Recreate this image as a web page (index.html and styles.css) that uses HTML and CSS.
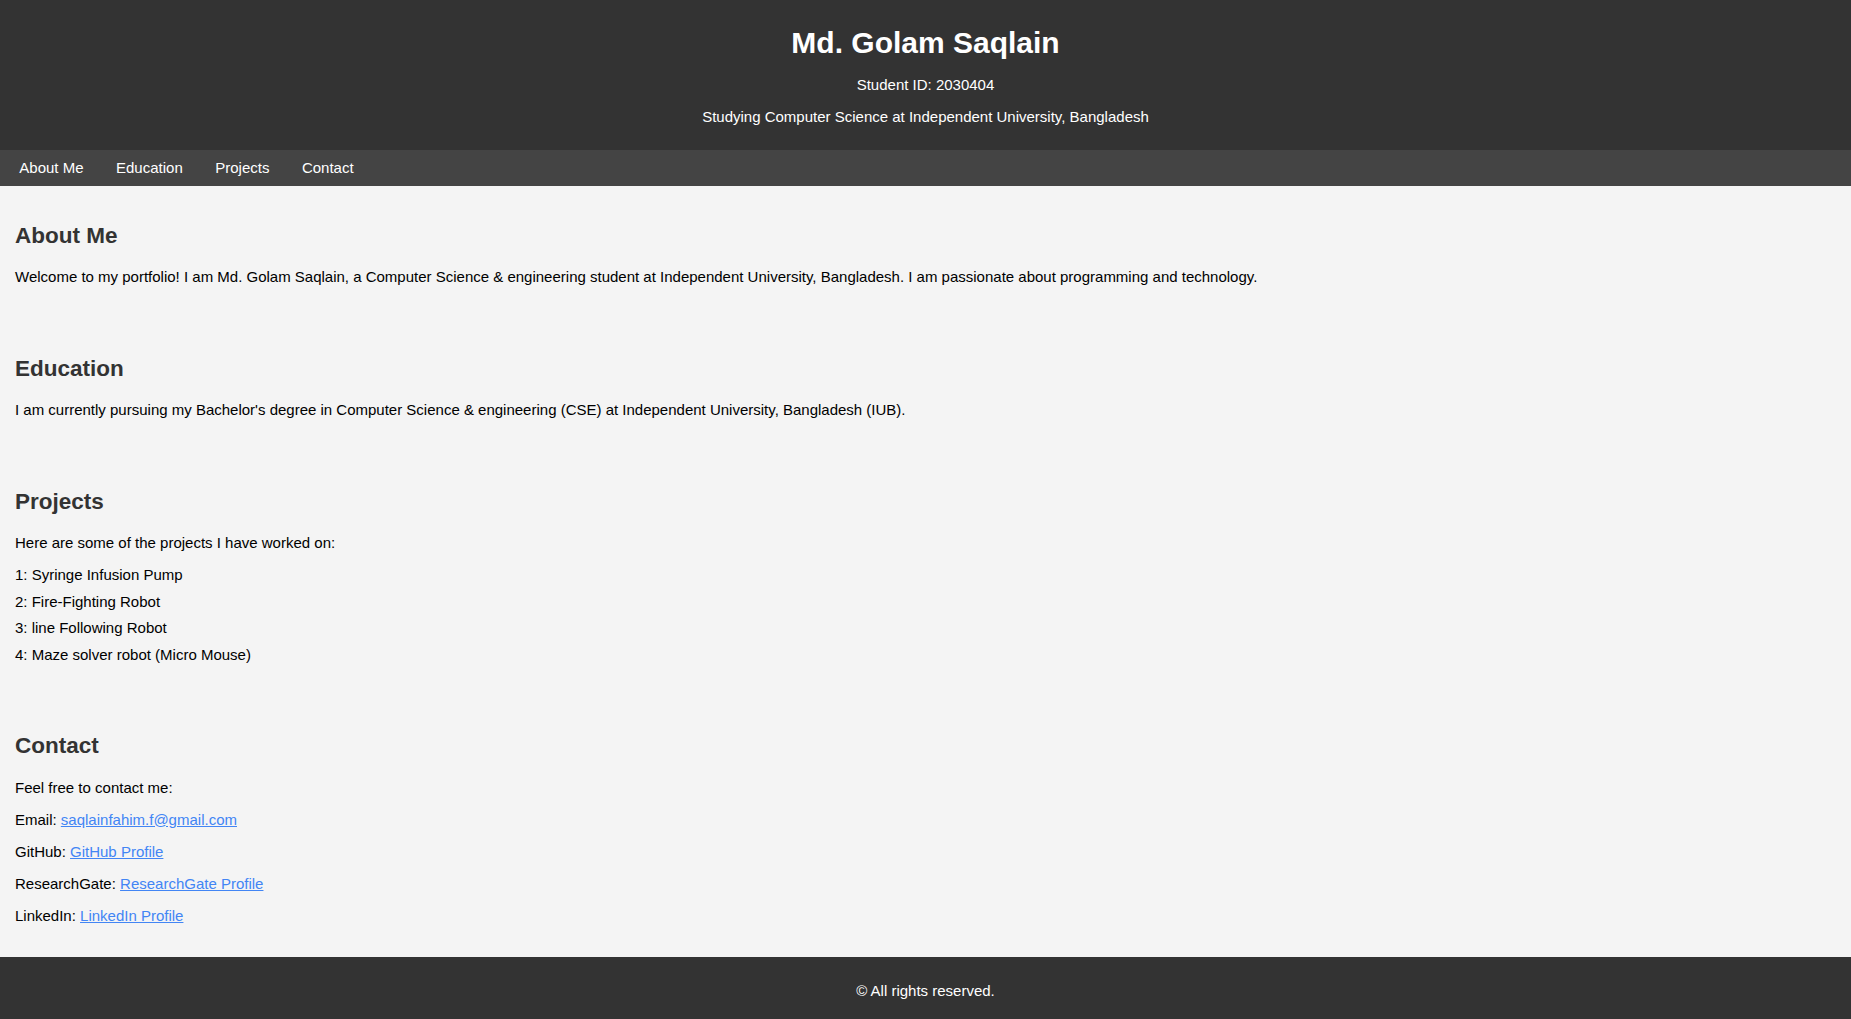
FILE: index.html
```html
<!DOCTYPE html>
<html lang="en">
<head>
<meta charset="UTF-8">
<title>Md. Golam Saqlain - Portfolio</title>
<link rel="stylesheet" href="styles.css">
</head>
<body>
<header class="site-header">
  <h1 class="site-title">Md. Golam Saqlain</h1>
  <p class="site-sub">Student ID: 2030404</p>
  <p class="site-sub">Studying Computer Science at Independent University, Bangladesh</p>
</header>
<nav class="site-nav">
  <a href="#about">About Me</a>
  <a href="#education">Education</a>
  <a href="#projects">Projects</a>
  <a href="#contact">Contact</a>
</nav>
<main class="content">
  <section id="about" class="section">
    <h2>About Me</h2>
    <p>Welcome to my portfolio! I am Md. Golam Saqlain, a Computer Science &amp; engineering student at Independent University, Bangladesh. I am passionate about programming and technology.</p>
  </section>
  <section id="education" class="section">
    <h2>Education</h2>
    <p>I am currently pursuing my Bachelor's degree in Computer Science &amp; engineering (CSE) at Independent University, Bangladesh (IUB).</p>
  </section>
  <section id="projects" class="section">
    <h2>Projects</h2>
    <p>Here are some of the projects I have worked on:</p>
    <ul class="project-list">
      <li>1: Syringe Infusion Pump</li>
      <li>2: Fire-Fighting Robot</li>
      <li>3: line Following Robot</li>
      <li>4: Maze solver robot (Micro Mouse)</li>
    </ul>
  </section>
  <section id="contact" class="section">
    <h2>Contact</h2>
    <p>Feel free to contact me:</p>
    <p>Email: <a href="mailto:saqlainfahim.f@gmail.com">saqlainfahim.f@gmail.com</a></p>
    <p>GitHub: <a href="#">GitHub Profile</a></p>
    <p>ResearchGate: <a href="#">ResearchGate Profile</a></p>
    <p>LinkedIn: <a href="#">LinkedIn Profile</a></p>
  </section>
</main>
<footer class="site-footer">
  <p>&copy; All rights reserved.</p>
</footer>
</body>
</html>
```

FILE: styles.css
```css
html, body {
  margin: 0;
  padding: 0;
}
body {
  font-family: "Liberation Sans", Arial, sans-serif;
  font-size: 15px;
  background: #f4f4f4;
  color: #000;
}
.site-header {
  background: #333;
  color: #fff;
  text-align: center;
  padding: 26px 0 25px;
}
.site-title {
  font-size: 30px;
  margin: 0 0 16px;
}
.site-sub {
  margin: 0 0 15px;
}
.site-sub:last-child {
  margin-bottom: 0;
}
.site-nav {
  background: #444;
  display: flex;
  gap: 32.5px;
  padding: 9.4px 19.3px;
}
.site-nav a {
  color: #fff;
  text-decoration: none;
}
.content {
  padding: 0;
}
.section {
  padding: 17px 15px 18.75px;
}
.section h2 {
  font-size: 22.5px;
  color: #333;
  margin: 20px 0 19.25px;
}
.section p {
  margin: 15px 0;
}
.project-list {
  list-style: none;
  padding: 0;
  margin: 15px 0;
}
.project-list li {
  margin-bottom: 9.55px;
}
.section a {
  color: #4285f4;
}
.site-footer {
  background: #333;
  color: #fff;
  text-align: center;
  padding: 10px 0 8px;
}
.site-footer p {
  margin: 15px 0;
}
```
